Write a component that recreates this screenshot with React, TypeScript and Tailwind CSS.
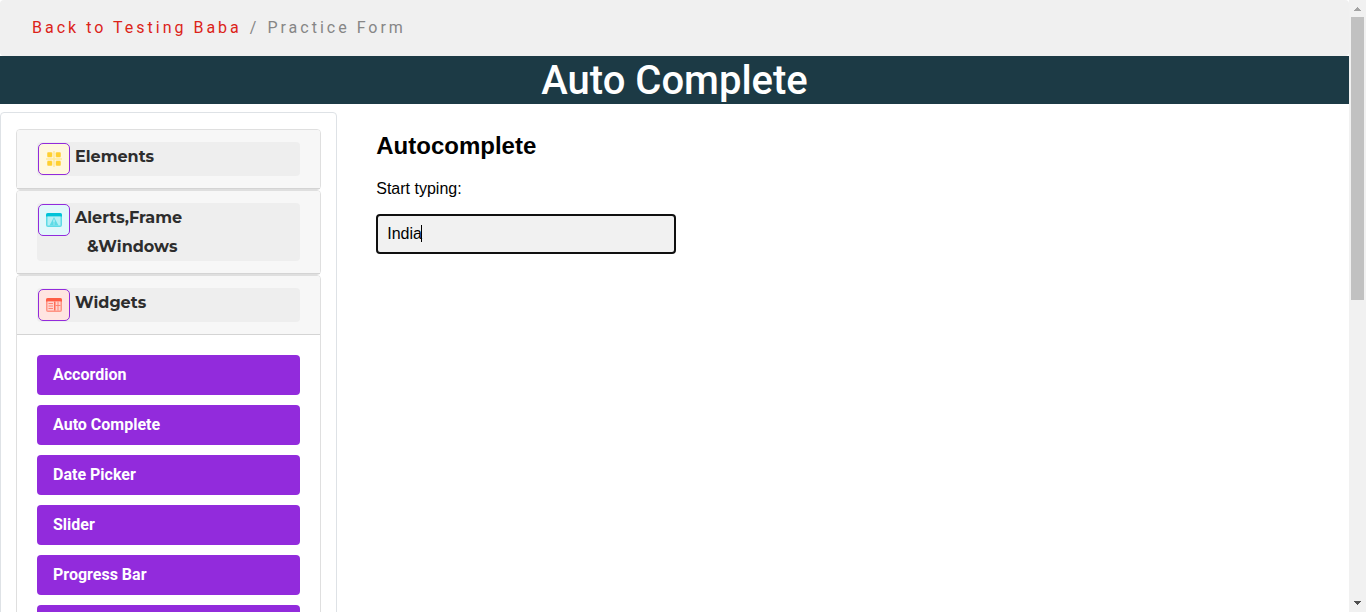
import React, { useState } from "react";

const ElementsIcon = () => (
  <svg viewBox="0 0 16 16" className="size-4" aria-hidden="true">
    <path d="M7.250 0h1.500v16h-1.500zM0 7.250h16v1.500H0z" fill="#ffe999" />
    <g fill="#ffe08a">
      <rect x="1" y="1" width="5.500" height="5.500" rx="1.200" />
      <rect x="9.500" y="1" width="5.500" height="5.500" rx="1.200" />
      <rect x="1" y="9.500" width="5.500" height="5.500" rx="1.200" />
      <rect x="9.500" y="9.500" width="5.500" height="5.500" rx="1.200" />
    </g>
    <g fill="#ffd02f">
      <rect x="1.500" y="1.500" width="4.500" height="4.500" rx="1" />
      <rect x="10" y="1.500" width="4.500" height="4.500" rx="1" />
      <rect x="1.500" y="10" width="4.500" height="4.500" rx="1" />
      <rect x="10" y="10" width="4.500" height="4.500" rx="1" />
    </g>
  </svg>
);

const AlertsIcon = () => (
  <svg viewBox="0 0 16 16" className="size-4" aria-hidden="true">
    <rect x="0" y="1" width="16" height="14" rx="2" fill="#5edbe6" />
    <path d="M0 4.500V3a2 2 0 0 1 2-2h12a2 2 0 0 1 2 2v1.500z" fill="#00c3d8" />
    <rect x="1.500" y="4.500" width="13" height="9" fill="#b5f0f5" />
    <path d="M8 5l4.500 8.500h-9z" fill="#5edbe6" />
    <path d="M7.500 7.500h1v3h-1zM7.500 11.500h1v1h-1z" fill="#d9f8fa" />
  </svg>
);

const WidgetsIcon = () => (
  <svg viewBox="0 0 16 16" className="size-4" aria-hidden="true">
    <rect x="0" y="1" width="16" height="14" rx="2" fill="#ff9484" />
    <path d="M0 4.500V3a2 2 0 0 1 2-2h12a2 2 0 0 1 2 2v1.500z" fill="#ff5d45" />
    <rect x="1.500" y="4.500" width="13" height="9" fill="#ffd5cf" />
    <path d="M8 4.500h1.500v9H8z" fill="#ff6b55" />
    <path d="M2.500 6H7v1H2.500zM2.500 8.500H7v1H2.500zM2.500 11H7v1H2.500zM11.500 4.500h1v9h-1zM9.500 8h5v1h-5z" fill="#ff8370" />
  </svg>
);

type SectionProps = {
  icon: React.ReactNode;
  tint: string;
  lines: string[];
  children?: React.ReactNode;
};

function Section({ icon, tint, lines, children }: SectionProps) {
  return (
    <div className="rounded border border-[#dfdfdf] bg-white">
      <div className="rounded-t-[3px] border-b border-[#d4d4d4] bg-[#f7f7f7] px-5 py-3">
        <button
          type="button"
          className="flex min-h-[34px] w-full items-start rounded bg-[#eeeeee] text-left font-['Montserrat','Inter',sans-serif] text-base leading-[29px] font-bold text-[#2d2d2d]"
        >
          <span
            className={`m-px flex size-8 shrink-0 items-center justify-center rounded-[5px] border border-[#922bdc] ${tint}`}
          >
            {icon}
          </span>
          <span className="ml-1">
            <span className="block">{lines[0]}</span>
            {lines[1] && <span className="block pl-3">{lines[1]}</span>}
          </span>
        </button>
      </div>
      {children}
    </div>
  );
}

const widgets = ["Accordion", "Auto Complete", "Date Picker", "Slider", "Progress Bar", "Tabs"];

export default function App() {
  const [country, setCountry] = useState("India");

  return (
    <div className="flex h-screen overflow-hidden bg-white font-['Roboto',sans-serif]">
      <div className="min-w-0 flex-1 overflow-y-auto [scrollbar-width:none]">
        <nav
          aria-label="Breadcrumb"
          className="flex gap-2 rounded bg-[#f0f0f0] px-8 py-4 text-base leading-6 tracking-[3px] text-[#868686]"
        >
          <a href="#" className="text-[#dc2318]">Back to Testing Baba</a>
          <span>/</span>
          <span>Practice Form</span>
        </nav>
        <h1 className="bg-[#1c3a45] pt-0.5 text-center text-[40px] leading-[46px] font-medium text-white">
          Auto Complete
        </h1>
        <div className="mt-2 flex items-start">
          <aside className="w-1/4 shrink-0 rounded border border-[#dee2e6] px-[15px] py-4">
            <Section icon={<ElementsIcon />} tint="bg-[#fff8de]" lines={["Elements"]} />
            <Section icon={<AlertsIcon />} tint="bg-[#e1f8fb]" lines={["Alerts,Frame", "&Windows"]} />
            <Section icon={<WidgetsIcon />} tint="bg-[#ffe5e1]" lines={["Widgets"]}>
              <ul className="flex flex-col gap-2.5 p-5">
                {widgets.map((name) => (
                  <li key={name}>
                    <a href="#" className="block rounded bg-[#922bdc] px-4 py-2 text-base leading-6 font-bold text-white">
                      {name}
                    </a>
                  </li>
                ))}
              </ul>
            </Section>
          </aside>
          <main className="min-w-0 flex-1 px-[39px] pt-4 font-['Liberation_Sans',sans-serif] text-black">
            <h2 className="text-2xl leading-9 font-bold">Autocomplete</h2>
            <label htmlFor="country" className="mt-[13px] block text-base leading-6">Start typing:</label>
            <div className="relative mt-[13px] w-[300px]">
              <input
                id="country"
                type="text"
                autoComplete="off"
                value={country}
                onChange={(e) => setCountry(e.target.value)}
                className="peer block h-10 w-full rounded border-2 border-[#101010] bg-[#f1f1f1] px-[9px] text-base outline-none"
              />
              <span aria-hidden="true" className="absolute top-[11px] left-[45px] h-[17px] w-px bg-black peer-focus:hidden" />
            </div>
          </main>
        </div>
      </div>
      <div aria-hidden="true" className="flex w-[17px] shrink-0 flex-col items-center bg-[#f1f1f1]">
        <svg viewBox="0 0 17 17" className="size-[17px] shrink-0" shapeRendering="crispEdges">
          <path d="M8 7h1v1h1v1h1v1h1v1H5v-1h1V9h1V8h1z" fill="#a3a3a3" />
        </svg>
        <div className="min-h-0 flex-1">
          <div className="h-[49%] w-[13px] bg-[#c1c1c1]" />
        </div>
        <svg viewBox="0 0 17 17" className="size-[17px] shrink-0" shapeRendering="crispEdges">
          <path d="M5 6h7v1h-1v1h-1v1H9v1H8V9H7V8H6V7H5z" fill="#505050" />
        </svg>
      </div>
    </div>
  );
}
